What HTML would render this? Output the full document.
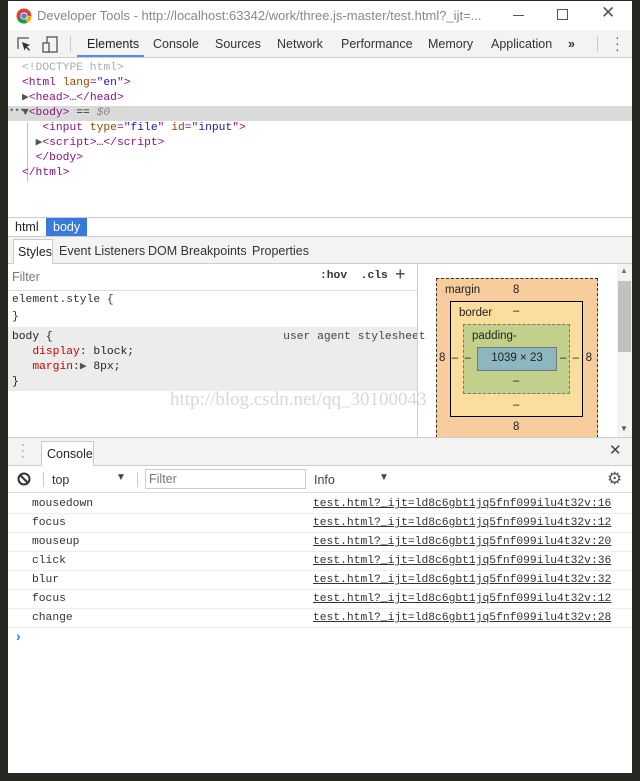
<!DOCTYPE html>
<html><head><meta charset="utf-8"><style>
*{box-sizing:border-box;margin:0;padding:0}
body{width:640px;height:781px;background:#272822;position:relative;overflow:hidden;font-family:"Liberation Sans",sans-serif;font-size:12px;color:#222}
.a{position:absolute}
.win{left:8px;top:1px;width:624px;height:772px;background:#fff}
.mono{font-family:"Liberation Mono",monospace;font-size:11.3px;white-space:pre}
.tag{color:#881280}.at{color:#994500}.av{color:#1a1aa6}.gr{color:#aaa}
.tab{position:absolute;top:37px;font-size:12.5px;color:#333}
.row{position:absolute;left:8px;width:624px;height:19px;border-bottom:1px solid #eee}
.lk{position:absolute;left:305px;top:3px;text-decoration:underline;color:#333}
.ev{position:absolute;left:24px;top:3px;color:#333}
</style></head><body>
<div class="a win"></div>
<!-- title bar -->
<svg class="a" style="left:16px;top:8px" width="16" height="16" viewBox="0 0 16 16"><circle cx="8" cy="8" r="7.5" fill="#db4437"/><path d="M8 8 L1.5 11.8 A7.5 7.5 0 0 0 11 14.9Z" fill="#0f9d58"/><path d="M8 8 L11 14.9 A7.5 7.5 0 0 0 15.5 8 L8 8Z" fill="#f4b400"/><circle cx="8" cy="8" r="3.6" fill="#fff"/><circle cx="8" cy="8" r="2.8" fill="#4285f4"/></svg>
<div class="a" style="left:37px;top:8px;font-size:13px;color:#888">Developer Tools - http://localhost:63342/work/three.js-master/test.html?_ijt=...</div>
<div class="a" style="left:513px;top:15px;width:11px;height:1px;background:#555"></div>
<div class="a" style="left:557px;top:9px;width:11px;height:11px;border:1px solid #555"></div>
<div class="a" style="left:601px;top:3px;font-size:17px;color:#555">✕</div>
<!-- toolbar -->
<div class="a" style="left:8px;top:30px;width:624px;height:28px;background:#f3f3f3;border-bottom:1px solid #ccc"></div>
<svg class="a" style="left:17px;top:37px" width="16" height="16"><path d="M1 12V1h11" fill="none" stroke="#555" stroke-width="1.3"/><path d="M5 5l8 3-3 1.5L13 13l-1 1-3-3.5-1.5 3z" fill="#333"/></svg>
<svg class="a" style="left:42px;top:36px" width="16" height="18"><rect x="5" y="1" width="10" height="15" fill="none" stroke="#555" stroke-width="1.3"/><rect x="1" y="7" width="6" height="9" fill="#f3f3f3" stroke="#555" stroke-width="1.3"/></svg>
<div class="a" style="left:70px;top:36px;width:1px;height:16px;background:#ccc"></div>
<div class="tab" style="left:87px;color:#222">Elements</div>
<div class="a" style="left:77px;top:55px;width:67px;height:2px;background:#4d90f0"></div>
<div class="tab" style="left:153px">Console</div>
<div class="tab" style="left:215px">Sources</div>
<div class="tab" style="left:277px">Network</div>
<div class="tab" style="left:341px">Performance</div>
<div class="tab" style="left:428px">Memory</div>
<div class="tab" style="left:491px">Application</div>
<div class="tab" style="left:568px;font-weight:bold">»</div>
<div class="a" style="left:597px;top:36px;width:1px;height:16px;background:#ccc"></div>
<div class="a" style="left:615px;top:34px;font-size:14px;color:#555;line-height:6px">·<br>·<br>·</div>
<!-- elements -->
<div class="a" style="left:8px;top:106px;width:624px;height:15px;background:#dadada"></div>
<div class="a" style="left:27px;top:122px;width:1px;height:60px;background:#a8c4f0"></div>
<div class="a mono" style="left:22px;top:61px;line-height:15px"><span class="gr">&lt;!DOCTYPE html&gt;</span>
<span class="tag">&lt;html</span> <span class="at">lang</span><span class="tag">="</span><span class="av">en</span><span class="tag">"&gt;</span>
<span style="color:#555">▶</span><span class="tag">&lt;head&gt;</span>…<span class="tag">&lt;/head&gt;</span>
<span style="color:#555">▼</span><span class="tag">&lt;body&gt;</span> == <i style="color:#888">$0</i>
   <span class="tag">&lt;input</span> <span class="at">type</span><span class="tag">="</span><span class="av">file</span><span class="tag">"</span> <span class="at">id</span><span class="tag">="</span><span class="av">input</span><span class="tag">"&gt;</span>
  <span style="color:#555">▶</span><span class="tag">&lt;script&gt;</span>…<span class="tag">&lt;/script&gt;</span>
  <span class="tag">&lt;/body&gt;</span>
<span class="tag">&lt;/html&gt;</span></div>
<div class="a mono" style="left:9px;top:106px;color:#666;font-size:9px">•••</div>
<!-- breadcrumb -->
<div class="a" style="left:8px;top:217px;width:624px;height:20px;border-top:1px solid #ccc;border-bottom:1px solid #ccc"></div>
<div class="a" style="left:15px;top:220px;font-size:12.5px">html</div>
<div class="a" style="left:46px;top:218px;width:41px;height:18px;background:#3879d9;color:#fff;font-size:12.5px;padding:2px 0 0 7px">body</div>
<!-- style tabs -->
<div class="a" style="left:8px;top:237px;width:624px;height:27px;background:#f3f3f3;border-bottom:1px solid #ccc"></div>
<div class="a" style="left:13px;top:239px;width:40px;height:25px;background:#fff;border:1px solid #ccc;border-bottom:none;font-size:12.5px;padding:5px 0 0 4px">Styles</div>
<div class="a" style="left:59px;top:244px;font-size:12.5px;color:#333">Event Listeners</div>
<div class="a" style="left:148px;top:244px;font-size:12.5px;color:#333">DOM Breakpoints</div>
<div class="a" style="left:252px;top:244px;font-size:12.5px;color:#333">Properties</div>
<!-- styles pane -->
<div class="a" style="left:12px;top:270px;font-size:12.5px;color:#777">Filter</div>
<div class="a mono" style="left:320px;top:270px;font-weight:bold;color:#333">:hov  .cls</div>
<div class="a" style="left:395px;top:264px;font-size:18px;color:#444">+</div>
<div class="a" style="left:8px;top:290px;width:409px;height:1px;background:#ddd"></div>
<div class="a mono" style="left:12px;top:292px;line-height:17px;color:#333">element.style {
}</div>
<div class="a" style="left:8px;top:327px;width:409px;height:64px;background:#ececec"></div>
<div class="a mono" style="left:12px;top:330px;line-height:15px;color:#222">body {                                  <span style="color:#444">user agent stylesheet</span>
   <span style="color:#c80000">display</span>: block;
   <span style="color:#c80000">margin</span>:<span style="color:#555">▶</span> 8px;
}</div>
<div class="a" style="left:417px;top:264px;width:1px;height:173px;background:#ccc"></div>
<!-- box model -->
<div class="a" style="left:436px;top:278px;width:162px;height:170px;background:#f9cc9d;border:1px dashed #333"></div>
<div class="a" style="left:445px;top:284px;font-size:11.5px">margin</div>
<div class="a" style="left:513px;top:284px;font-size:11.5px">8</div>
<div class="a" style="left:450px;top:301px;width:133px;height:116px;background:#fbdd9d;border:1px solid #000"></div>
<div class="a" style="left:459px;top:307px;font-size:11.5px">border</div>
<div class="a" style="left:513px;top:305px;font-size:11.5px">–</div>
<div class="a" style="left:463px;top:324px;width:107px;height:70px;background:#c3d08b;border:1px dashed #777"></div>
<div class="a" style="left:472px;top:330px;font-size:11.5px">padding-</div>
<div class="a" style="left:477px;top:347px;width:80px;height:24px;background:#8cb6c0;border:1px solid #777;font-size:11.5px;text-align:center;padding-top:4px">1039 × 23</div>
<div class="a" style="left:439px;top:352px;font-size:11.5px">8 &nbsp;–&nbsp; –</div>
<div class="a" style="left:560px;top:352px;font-size:11.5px">– &nbsp;– &nbsp;8</div>
<div class="a" style="left:513px;top:375px;font-size:11.5px">–</div>
<div class="a" style="left:513px;top:399px;font-size:11.5px">–</div>
<div class="a" style="left:513px;top:421px;font-size:11.5px">8</div>
<div class="a" style="left:617px;top:264px;width:15px;height:173px;background:#f3f3f3"></div>
<div class="a" style="left:618px;top:281px;width:13px;height:71px;background:#c1c1c1"></div>
<div class="a" style="left:620px;top:266px;font-size:8px;color:#777">▲</div>
<div class="a" style="left:620px;top:424px;font-size:8px;color:#555">▼</div>
<div class="a" style="left:170px;top:389px;font-family:'Liberation Serif',serif;font-size:19px;color:#d8d8d8">http://blog.csdn.net/qq_30100043</div>
<!-- console drawer -->
<div class="a" style="left:8px;top:437px;width:624px;height:29px;background:#f3f3f3;border-top:1px solid #ccc;border-bottom:1px solid #ccc"></div>
<div class="a" style="left:21px;top:442px;font-size:11px;color:#666;line-height:6px">·<br>·<br>·</div>
<div class="a" style="left:41px;top:441px;width:53px;height:25px;background:#fff;border:1px solid #ccc;border-bottom:none;font-size:12.5px;padding:5px 0 0 5px">Console</div>
<div class="a" style="left:609px;top:441px;font-size:15px;color:#444">✕</div>
<div class="a" style="left:8px;top:492px;width:624px;height:1px;background:#ddd"></div>
<svg class="a" style="left:17px;top:472px" width="14" height="14"><circle cx="7" cy="7" r="5.5" fill="none" stroke="#333" stroke-width="2"/><path d="M3 3l8 8" stroke="#333" stroke-width="2"/></svg>
<div class="a" style="left:43px;top:472px;width:1px;height:15px;background:#ccc"></div>
<div class="a" style="left:52px;top:473px;font-size:12.5px;color:#333">top</div>
<div class="a" style="left:116px;top:472px;font-size:10px;color:#444">▼</div>
<div class="a" style="left:137px;top:472px;width:1px;height:15px;background:#ccc"></div>
<div class="a" style="left:145px;top:469px;width:161px;height:20px;border:1px solid #ccc;background:#fff;font-size:12.5px;color:#777;padding:2px 0 0 3px">Filter</div>
<div class="a" style="left:314px;top:473px;font-size:12.5px;color:#444">Info</div>
<div class="a" style="left:379px;top:472px;font-size:10px;color:#444">▼</div>
<div class="a" style="left:607px;top:469px;font-size:17px;color:#555">⚙</div>
<div class="mono">
<div class="row" style="top:495px"><span class="ev">mousedown</span><span class="lk">test.html?_ijt=ld8c6gbt1jq5fnf099ilu4t32v:16</span></div>
<div class="row" style="top:514px"><span class="ev">focus</span><span class="lk">test.html?_ijt=ld8c6gbt1jq5fnf099ilu4t32v:12</span></div>
<div class="row" style="top:533px"><span class="ev">mouseup</span><span class="lk">test.html?_ijt=ld8c6gbt1jq5fnf099ilu4t32v:20</span></div>
<div class="row" style="top:552px"><span class="ev">click</span><span class="lk">test.html?_ijt=ld8c6gbt1jq5fnf099ilu4t32v:36</span></div>
<div class="row" style="top:571px"><span class="ev">blur</span><span class="lk">test.html?_ijt=ld8c6gbt1jq5fnf099ilu4t32v:32</span></div>
<div class="row" style="top:590px"><span class="ev">focus</span><span class="lk">test.html?_ijt=ld8c6gbt1jq5fnf099ilu4t32v:12</span></div>
<div class="row" style="top:609px"><span class="ev">change</span><span class="lk">test.html?_ijt=ld8c6gbt1jq5fnf099ilu4t32v:28</span></div>
</div>
<div class="a" style="left:16px;top:628px;font-size:14px;color:#367cf1;font-weight:bold">›</div>
</body></html>
